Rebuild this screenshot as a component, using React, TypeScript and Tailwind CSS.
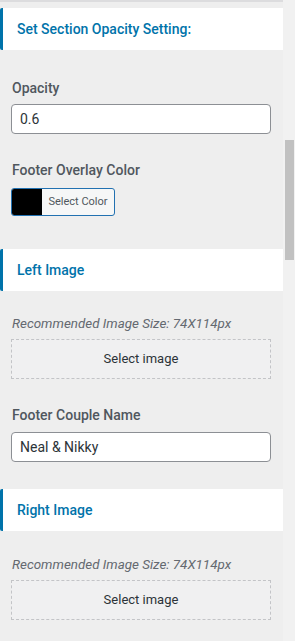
import React from 'react';

const SectionHeader: React.FC<{ title: string }> = ({ title }) => (
  <div className="h-[42px] bg-white border-l-[3px] border-[#0073aa] rounded-l-[2px] flex items-center pl-[14px]">
    <span className="text-[14px] font-medium text-[#0073aa]">{title}</span>
  </div>
);

const Label: React.FC<{ text: string }> = ({ text }) => (
  <div className="text-[14px] leading-[20px] font-medium text-[#50575e] px-[12px]">{text}</div>
);

const TextInput: React.FC<{ value: string }> = ({ value }) => (
  <div className="mx-[11px] w-[260px] h-[30px] bg-white border border-[#8c8f94] rounded-[4px] flex items-center px-[8px] text-[14px] text-[#2c3338]">
    {value}
  </div>
);

const ImagePicker: React.FC = () => (
  <>
    <div className="text-[13.4px] leading-[16px] italic text-[#646970] px-[12px]">
      Recommended Image Size: 74X114px
    </div>
    <div className="mt-[7px] mx-[11px] w-[260px] h-[40px] border border-dashed border-[#c3c4c7] bg-[#f0f0f1] flex items-center justify-center text-[13px] text-[#2c3338]">
      Select image
    </div>
  </>
);

export default function App() {
  return (
    <div className="w-[295px] h-[641px] overflow-hidden flex bg-[#eeeeee]" style={{ fontFamily: 'Roboto, "Noto Sans", sans-serif' }}>
      <div className="w-[283px] flex flex-col">
        <div className="h-[2px] bg-[#dcdcde]" />
        <div className="h-[6px]" />
        <SectionHeader title="Set Section Opacity Setting:" />
        <div className="h-[28px]" />
        <Label text="Opacity" />
        <div className="h-[6px]" />
        <TextInput value="0.6" />
        <div className="h-[26px]" />
        <Label text="Footer Overlay Color" />
        <div className="h-[8px]" />
        <div className="mx-[11px] w-[104px] h-[28px] border border-[#2271b1] rounded-[3px] bg-[#f6f7f7] flex overflow-hidden">
          <div className="w-[30px] bg-black" />
          <div className="flex-1 flex items-center justify-center text-[11px] text-[#50575e]">Select Color</div>
        </div>
        <div className="h-[33px]" />
        <SectionHeader title="Left Image" />
        <div className="h-[25px]" />
        <ImagePicker />
        <div className="h-[26px]" />
        <Label text="Footer Couple Name" />
        <div className="h-[7px]" />
        <TextInput value="Neal & Nikky" />
        <div className="h-[27px]" />
        <SectionHeader title="Right Image" />
        <div className="h-[26px]" />
        <ImagePicker />
      </div>
      <div className="w-[12px] bg-[#f1f1f1] flex flex-col">
        <div className="h-[140px]" />
        <div className="ml-[2px] w-[9px] h-[120px] bg-[#c1c1c1]" />
      </div>
    </div>
  );
}
